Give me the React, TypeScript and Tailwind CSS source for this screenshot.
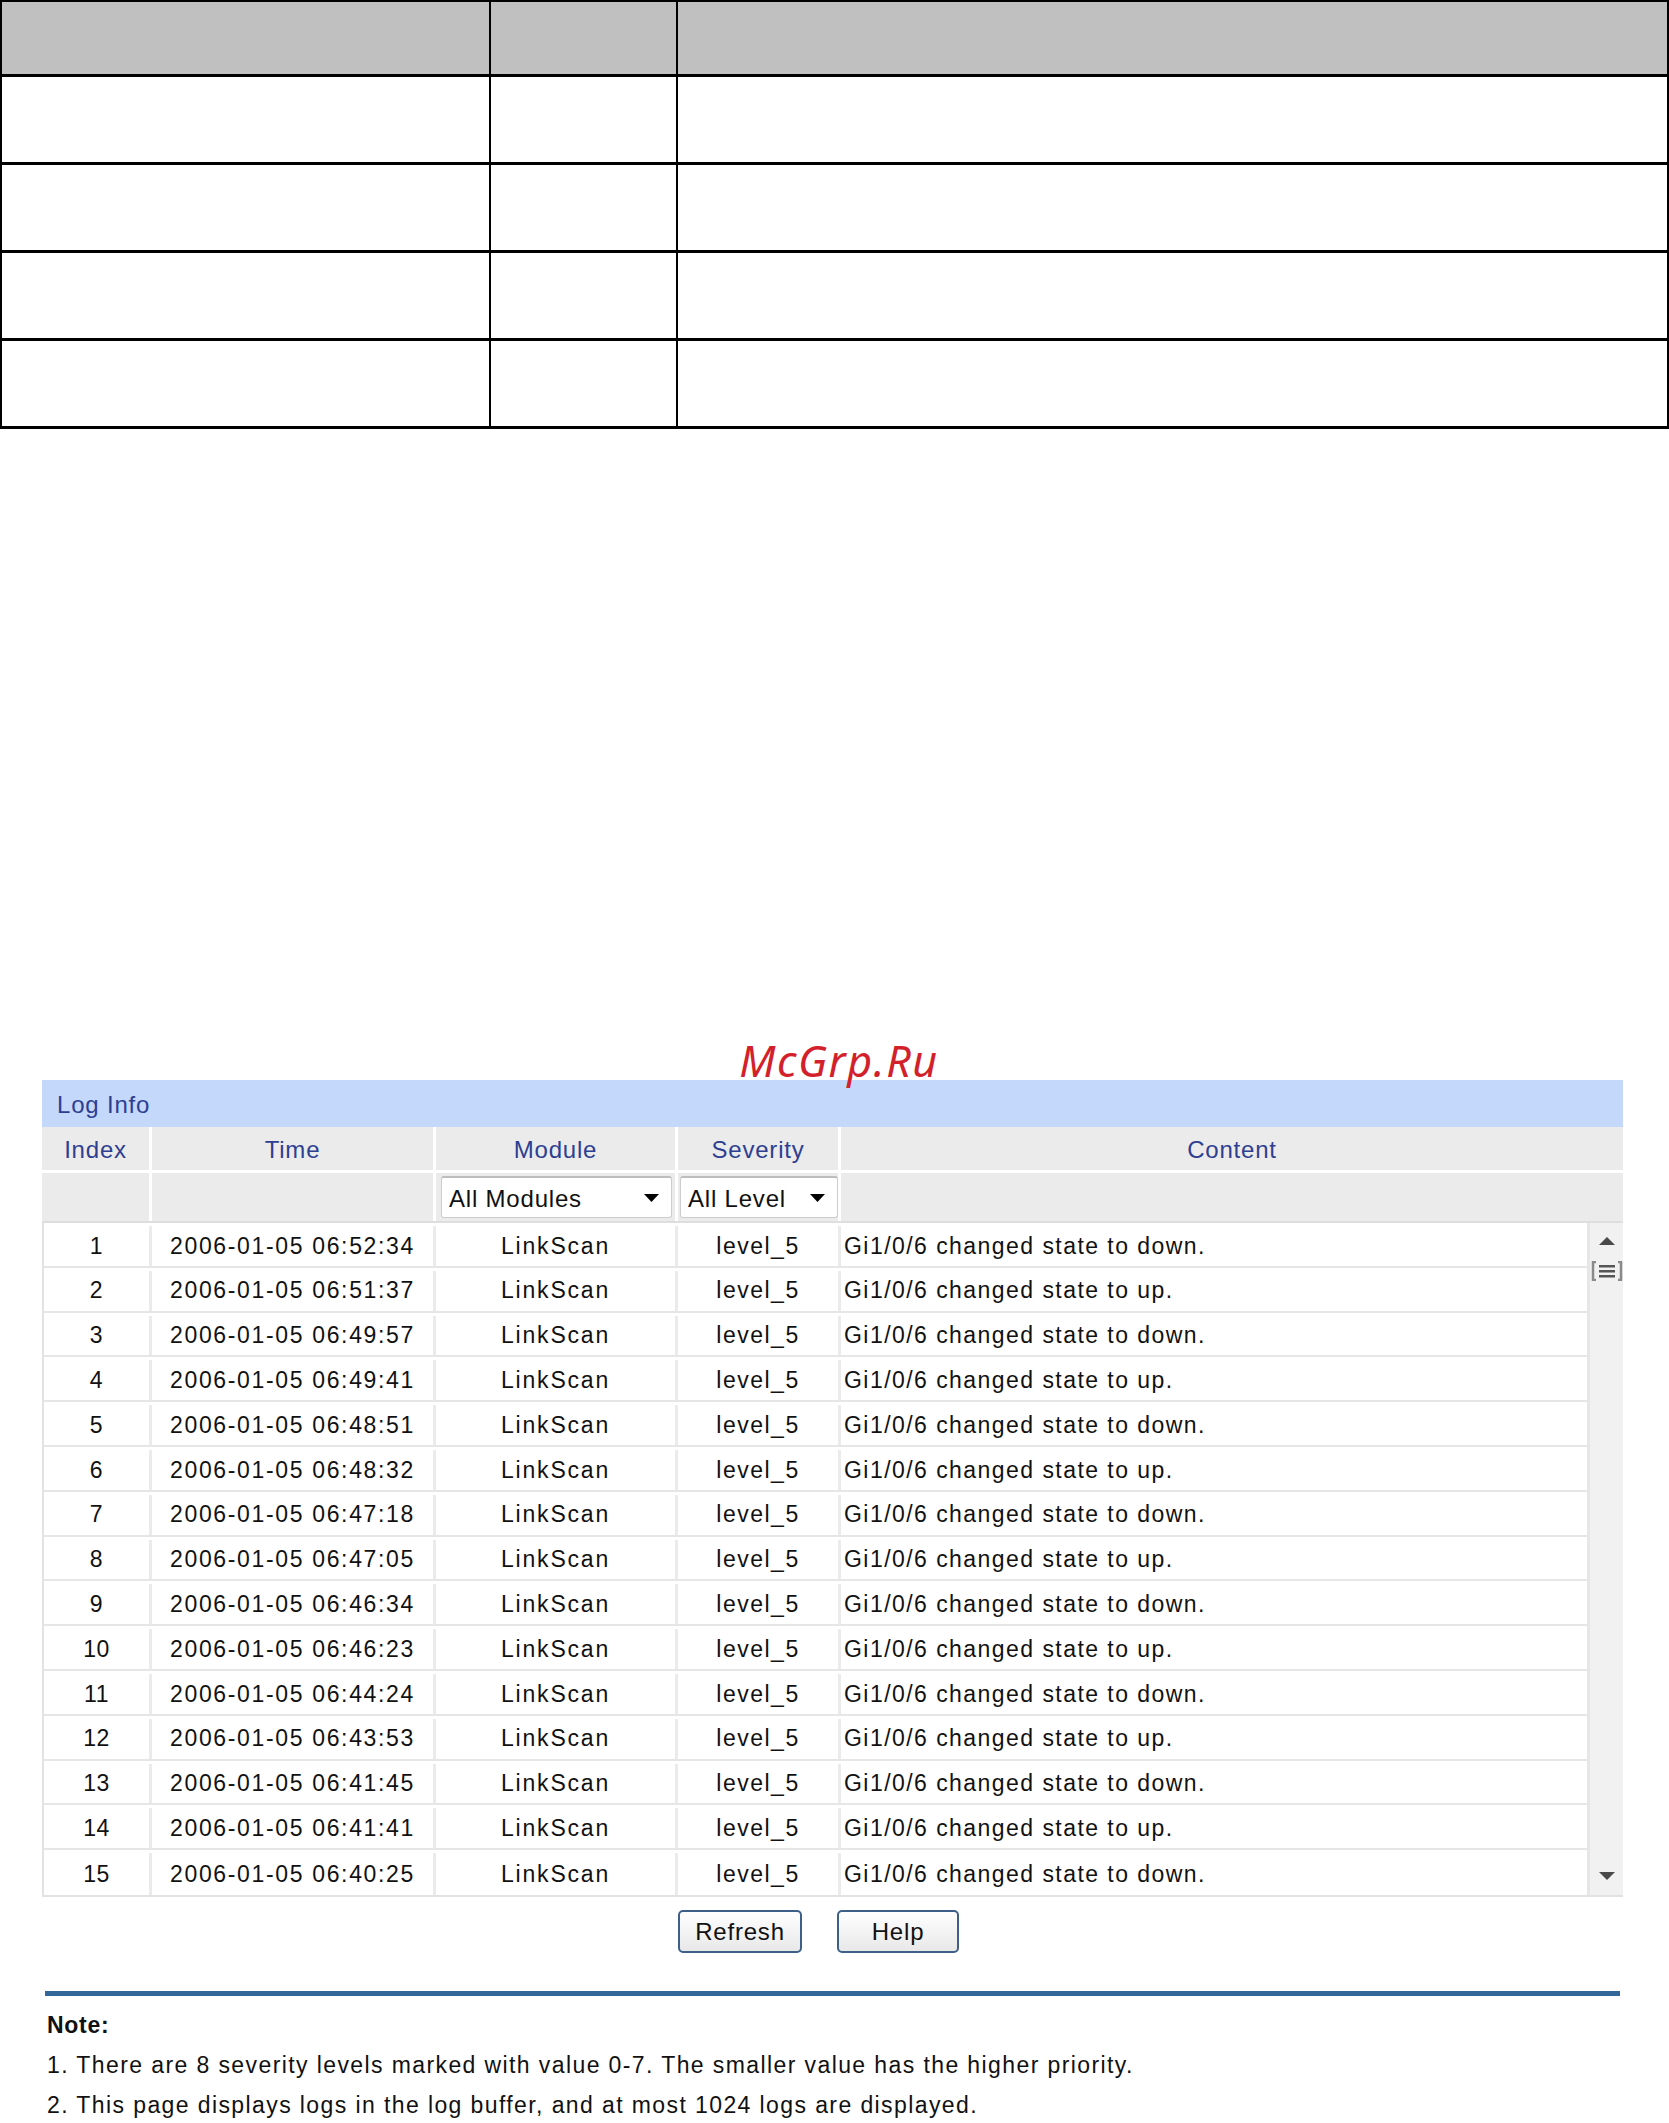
import React from "react";

const logs: [number, string, string][] = [
  [1, "06:52:34", "down"],
  [2, "06:51:37", "up"],
  [3, "06:49:57", "down"],
  [4, "06:49:41", "up"],
  [5, "06:48:51", "down"],
  [6, "06:48:32", "up"],
  [7, "06:47:18", "down"],
  [8, "06:47:05", "up"],
  [9, "06:46:34", "down"],
  [10, "06:46:23", "up"],
  [11, "06:44:24", "down"],
  [12, "06:43:53", "up"],
  [13, "06:41:45", "down"],
  [14, "06:41:41", "up"],
  [15, "06:40:25", "down"],
];

function TopTable() {
  const rows = [0, 1, 2, 3];
  return (
    <div className="w-[1669px] border-2 border-b-[3px] border-black">
      <div className="flex h-[75px] border-b-[3px] border-black bg-[#c0c0c0]">
        <div className="w-[489px] border-r-2 border-black" />
        <div className="w-[187px] border-r-2 border-black" />
        <div className="flex-1" />
      </div>
      {rows.map((r) => (
        <div
          key={r}
          className={`flex ${r < 3 ? "h-[88px] border-b-[3px] border-black" : "h-[85px]"}`}
        >
          <div className="w-[489px] border-r-2 border-black" />
          <div className="w-[187px] border-r-2 border-black" />
          <div className="flex-1" />
        </div>
      ))}
    </div>
  );
}

function Select({ label, width }: { label: string; width: string }) {
  return (
    <div
      className={`${width} flex h-[42px] items-center justify-between rounded-[3px] border border-[#cdcdcd] border-t-2 border-t-[#bdbdbd] bg-white pl-[7px] pr-[12px]`}
    >
      <span className="pt-[2px] text-[24px] tracking-[0.8px] text-[#111]">{label}</span>
      <svg width="15" height="8" viewBox="0 0 15 8">
        <polygon points="0,0 15,0 7.5,8" fill="#000" />
      </svg>
    </div>
  );
}

function Scrollbar() {
  return (
    <div className="flex w-[36px] flex-col items-center border-l-[3px] border-[#e6e6e6] bg-[#f1f1f1]">
      <svg className="mt-[14px]" width="16" height="8" viewBox="0 0 16 8">
        <polygon points="8,0 16,8 0,8" fill="#4a4a4a" />
      </svg>
      <svg className="mt-[16px]" width="32" height="20" viewBox="0 0 32 20">
        <path d="M5 1 H2 V19 H5" fill="none" stroke="#8a8a8a" strokeWidth="2.5" />
        <path d="M27 1 H30 V19 H27" fill="none" stroke="#8a8a8a" strokeWidth="2.5" />
        <rect x="8" y="4" width="16" height="2.5" fill="#555" />
        <rect x="8" y="9" width="16" height="2.5" fill="#555" />
        <rect x="8" y="14" width="16" height="2.5" fill="#555" />
      </svg>
      <div className="flex-1" />
      <svg className="mb-[15px]" width="16" height="8" viewBox="0 0 16 8">
        <polygon points="0,0 16,0 8,8" fill="#4a4a4a" />
      </svg>
    </div>
  );
}

function LogInfo() {
  const head = "pt-[2px] text-[24px] tracking-[0.8px] text-[#2e3f92]";
  return (
    <div className="ml-[42px] w-[1581px]">
      <div className="flex h-[47px] items-center bg-[#c4d8fc] pl-[15px]">
        <span className={head}>Log Info</span>
      </div>
      <div className="flex h-[46px] border-b-[3px] border-white bg-[#ebebeb]">
        <div className={`flex w-[110px] items-center justify-center border-r-[3px] border-white ${head}`}>Index</div>
        <div className={`flex w-[284px] items-center justify-center border-r-[3px] border-white ${head}`}>Time</div>
        <div className={`flex w-[242px] items-center justify-center border-r-[3px] border-white ${head}`}>Module</div>
        <div className={`flex w-[163px] items-center justify-center border-r-[3px] border-white ${head}`}>Severity</div>
        <div className={`flex flex-1 items-center justify-center ${head}`}>Content</div>
      </div>
      <div className="flex h-[50px] border-b-2 border-[#dedede] bg-[#ebebeb]">
        <div className="w-[110px] border-r-[3px] border-white" />
        <div className="w-[284px] border-r-[3px] border-white" />
        <div className="flex w-[242px] items-center border-r-[3px] border-white pl-[5px]">
          <Select label="All Modules" width="w-[231px]" />
        </div>
        <div className="flex w-[163px] items-center border-r-[3px] border-white pl-[2px]">
          <Select label="All Level" width="w-[158px]" />
        </div>
        <div className="flex-1" />
      </div>
      <div className="flex border-b-2 border-l-2 border-[#e2e2e2]">
        <div className="flex-1">
          {logs.map(([i, t, s], idx) => (
            <div
              key={i}
              className={`flex h-[44.8px] pt-[3px] text-[23px] text-[#111] ${idx < logs.length - 1 ? "border-b-2 border-[#e6e6e6]" : ""}`}
            >
              <div className="flex w-[108px] items-center justify-center border-r-[3px] border-[#ebebeb] tracking-[0.5px]">{i}</div>
              <div className="flex w-[284px] items-center justify-center border-r-[3px] border-[#ebebeb] tracking-[1.65px]">
                2006-01-05 {t}
              </div>
              <div className="flex w-[242px] items-center justify-center border-r-[3px] border-[#ebebeb] tracking-[1.8px]">LinkScan</div>
              <div className="flex w-[163px] items-center justify-center border-r-[3px] border-[#ebebeb] tracking-[1.5px]">level_5</div>
              <div className="flex flex-1 items-center pl-[3px] tracking-[1.45px]">
                Gi1/0/6 changed state to {s}.
              </div>
            </div>
          ))}
        </div>
        <Scrollbar />
      </div>
      <div className="mt-[13px] flex gap-[35px] pl-[636px]">
        <button className="h-[43px] w-[124px] rounded-[5px] border-2 border-[#3e5f88] bg-linear-to-b from-white to-[#e8e8e8] pt-[2px] text-[24px] tracking-[0.8px] text-[#111]">
          Refresh
        </button>
        <button className="h-[43px] w-[122px] rounded-[5px] border-2 border-[#3e5f88] bg-linear-to-b from-white to-[#e8e8e8] pt-[2px] text-[24px] tracking-[0.8px] text-[#111]">
          Help
        </button>
      </div>
    </div>
  );
}

export default function App() {
  return (
    <div className="h-[2123px] w-[1669px] overflow-hidden bg-white font-['Liberation_Sans',Arial,sans-serif]">
      <TopTable />
      <div className="mt-[610px] h-[41px] pl-[9px] text-center font-['Noto_Sans',sans-serif] text-[43px] italic leading-none tracking-[1.5px] text-[#d3212b]">
        McGrp.Ru
      </div>
      <LogInfo />
      <div className="ml-[45px] mt-[38px] h-[5px] w-[1575px] bg-[#33679a]" />
      <div className="ml-[47px] mt-[9px] text-[23px] leading-[40px] tracking-[1.4px] text-[#111]">
        <div className="font-bold tracking-[0.7px]">Note:</div>
        <div>1. There are 8 severity levels marked with value 0-7. The smaller value has the higher priority.</div>
        <div>2. This page displays logs in the log buffer, and at most 1024 logs are displayed.</div>
      </div>
    </div>
  );
}
